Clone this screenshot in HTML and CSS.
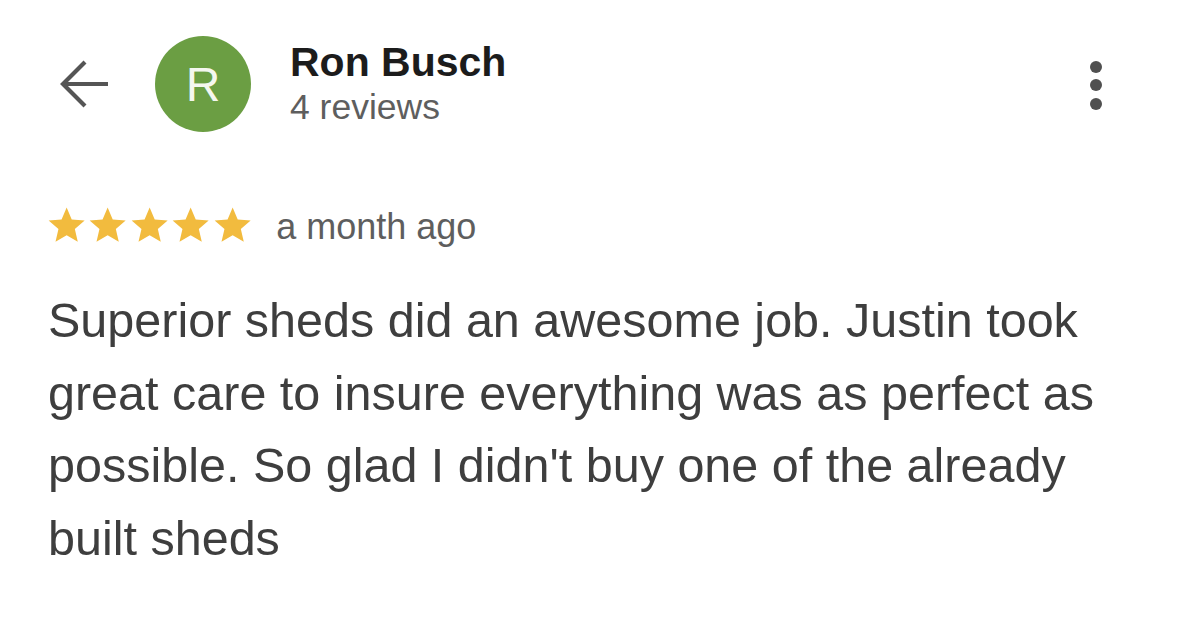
FILE: index.html
```html
<!DOCTYPE html>
<html>
<head>
<meta charset="utf-8">
<link rel="stylesheet" href="styles.css">
</head>
<body>
<div class="page">
  <header class="header">
    <div class="back">
      <svg width="52" height="52" viewBox="0 0 52 52"><path d="M52 26 H7 M29 4 L7 26 L29 48" fill="none" stroke="#555" stroke-width="4.2" stroke-linecap="butt" stroke-linejoin="miter"/></svg>
    </div>
    <div class="avatar">R</div>
    <div class="who">
      <div class="name">Ron Busch</div>
      <div class="count">4 reviews</div>
    </div>
    <div class="more"><span></span><span></span><span></span></div>
  </header>
  <div class="meta">
    <div class="stars">
      <svg viewBox="0 0 24 24"><path d="M12 1.5l3.1 7.3 7.9.7-6 5.2 1.8 7.8L12 18.4l-6.8 4.1L7 14.7 1 9.5l7.9-.7z"/></svg>
      <svg viewBox="0 0 24 24"><path d="M12 1.5l3.1 7.3 7.9.7-6 5.2 1.8 7.8L12 18.4l-6.8 4.1L7 14.7 1 9.5l7.9-.7z"/></svg>
      <svg viewBox="0 0 24 24"><path d="M12 1.5l3.1 7.3 7.9.7-6 5.2 1.8 7.8L12 18.4l-6.8 4.1L7 14.7 1 9.5l7.9-.7z"/></svg>
      <svg viewBox="0 0 24 24"><path d="M12 1.5l3.1 7.3 7.9.7-6 5.2 1.8 7.8L12 18.4l-6.8 4.1L7 14.7 1 9.5l7.9-.7z"/></svg>
      <svg viewBox="0 0 24 24"><path d="M12 1.5l3.1 7.3 7.9.7-6 5.2 1.8 7.8L12 18.4l-6.8 4.1L7 14.7 1 9.5l7.9-.7z"/></svg>
    </div>
    <span class="when">a month ago</span>
  </div>
  <p class="text">Superior sheds did an awesome job. Justin took great care to insure everything was as perfect as possible. So glad I didn't buy one of the already built sheds</p>
</div>
</body>
</html>
```

FILE: styles.css
```css
html, body {
  margin: 0;
  padding: 0;
  background: #fff;
}
body {
  font-family: "Liberation Sans", Arial, sans-serif;
  width: 1179px;
  height: 620px;
  overflow: hidden;
}
.page {
  padding: 36px 60px 0 48px;
}
.header {
  display: flex;
  align-items: center;
  height: 96px;
}
.back {
  width: 52px;
  height: 52px;
  margin-left: 8px;
  margin-right: 47px;
}
.back svg { display: block; }
.avatar {
  width: 96px;
  height: 96px;
  border-radius: 50%;
  background: #6b9e43;
  color: #f4f7ef;
  font-size: 48px;
  display: flex;
  align-items: center;
  justify-content: center;
  flex: none;
}
.who {
  margin-left: 39px;
  flex: 1;
  margin-top: -3px;
}
.name {
  font-weight: bold;
  font-size: 41px;
  color: #1c1c1c;
  line-height: 48px;
}
.count {
  font-size: 35.5px;
  color: #5e5e5e;
  line-height: 42px;
}
.more {
  display: flex;
  flex-direction: column;
  gap: 6.5px;
  margin-right: 17px;
  margin-top: 2px;
}
.more span {
  width: 12px;
  height: 12px;
  border-radius: 50%;
  background: #505050;
}
.meta {
  display: flex;
  align-items: center;
  margin-top: 74px;
}
.stars {
  display: flex;
  gap: 2.2px;
  margin-top: -5px;
  margin-left: -1px;
}
.stars svg {
  width: 39.3px;
  height: 39.3px;
  fill: #f2bb3e;
}
.when {
  margin-left: 24px;
  font-size: 36px;
  color: #5e5e5e;
}
.text {
  margin: 36px 0 0 0;
  font-size: 48.5px;
  line-height: 72.5px;
  color: #3e3e3e;
}
```
